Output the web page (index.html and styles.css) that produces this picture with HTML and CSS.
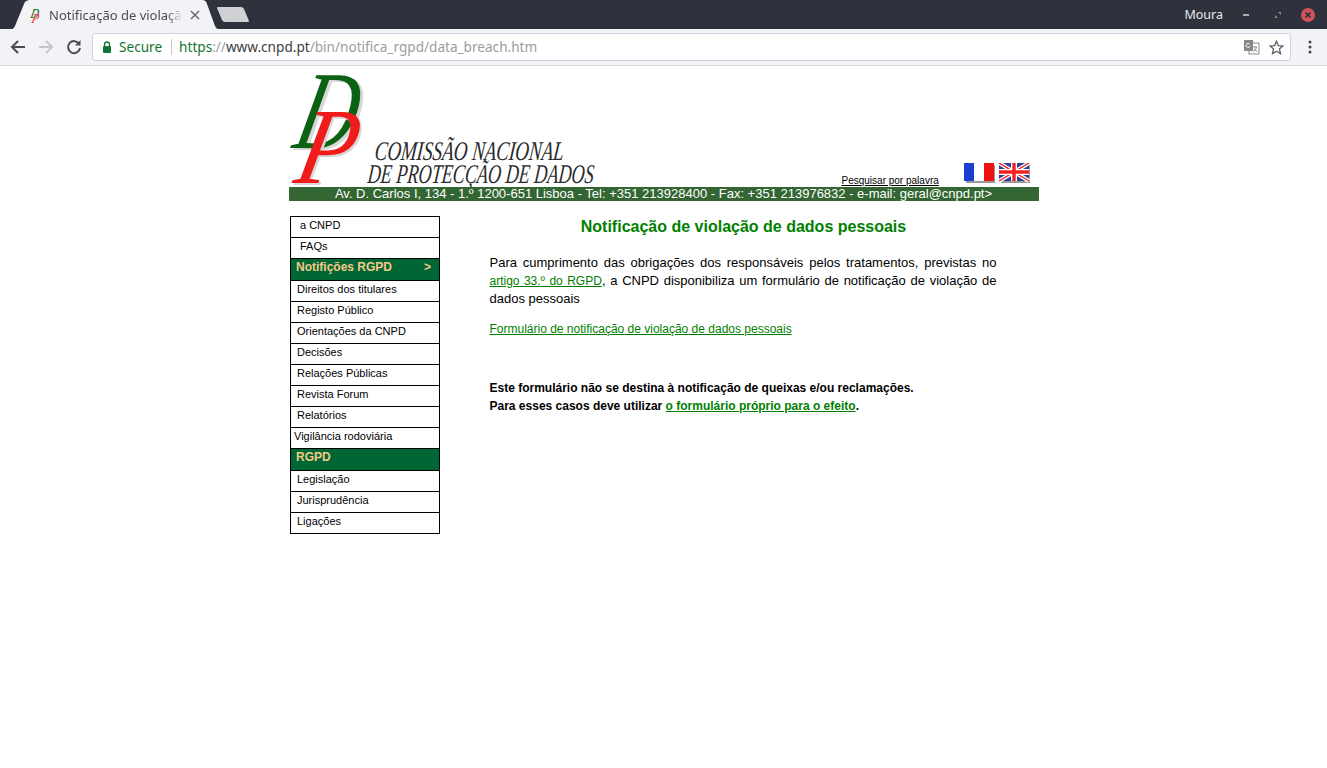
FILE: index.html
```html
<!DOCTYPE html>
<html lang="pt">
<head>
<meta charset="utf-8">
<title>Notificação de violação de dados pessoais</title>
<link rel="stylesheet" href="styles.css">
</head>
<body>
<div class="titlebar">
  <div class="tab">
    <svg class="tab-shape" width="206" height="29" viewBox="0 0 206 29"><path d="M0 29 C1 29 2 28 3 26 L12 4 C13 1 15 0 18 0 L190 0 C193 0 194 1 195 4 L203 26 C204 28 205 29 206 29 Z" fill="#f2f3f7"/></svg>
    <svg class="favicon" width="14" height="18" viewBox="0 0 14 18"><text class="fav-d" transform="translate(0 12) skewX(-12) scale(.85 1.05)">D</text><text class="fav-p" transform="translate(1 17) skewX(-14) scale(.85 1.05)">P</text></svg>
    <span class="tab-title">Notificação de violação</span>
    <svg class="tab-close" width="10" height="10" viewBox="0 0 10 10"><path d="M1 1 L9 9 M9 1 L1 9" stroke="#6b6e73" stroke-width="1.6"/></svg>
  </div>
  <svg class="newtab" width="33" height="16" viewBox="0 0 33 16"><path d="M1 0 L24 0 Q26 0 27 2 L32 14 Q32 15 31 15 L8 15 Q6 15 5 13 L0 1 Q0 0 1 0 Z" fill="#d0d1d4"/></svg>
  <div class="spacer"></div>
  <span class="user">Moura</span>
  <svg class="win" width="8" height="8" viewBox="0 0 8 8"><rect x="0" y="3" width="6" height="2" fill="#a9abb0"/></svg>
  <svg class="win win-max" width="8" height="8" viewBox="0 0 8 8"><path d="M4 1 H7 V4 Z M1 4 L4 7 H1 Z" fill="#8a8d93"/></svg>
  <svg class="win-close" width="14" height="14" viewBox="0 0 14 14"><circle cx="7" cy="7" r="7" fill="#d0525a"/><path d="M4.5 4.5 L9.5 9.5 M9.5 4.5 L4.5 9.5" stroke="#2f323c" stroke-width="1.7"/></svg>
</div>
<div class="toolbar">
  <svg class="tool" width="16" height="16" viewBox="0 0 16 16"><path d="M15 8 H2 M8 2 L2 8 L8 14" fill="none" stroke="#4a4c50" stroke-width="2"/></svg>
  <svg class="tool" width="16" height="16" viewBox="0 0 16 16"><path d="M1 8 H14 M8 2 L14 8 L8 14" fill="none" stroke="#c4c6ca" stroke-width="2"/></svg>
  <svg class="tool" width="16" height="16" viewBox="0 0 16 16"><path d="M13.2 5 A6 6 0 1 0 14 9" fill="none" stroke="#4a4c50" stroke-width="2"/><path d="M14.5 1 V6.5 H9 Z" fill="#4a4c50"/></svg>
  <div class="omnibox">
    <svg class="lock" width="10" height="12" viewBox="0 0 10 12"><path d="M2.5 5 V3.5 a2.5 2.5 0 0 1 5 0 V5" fill="none" stroke="#137333" stroke-width="1.3"/><rect x="1" y="5" width="8" height="7" rx="1" fill="#137333"/></svg>
    <span class="secure">Secure</span>
    <span class="sep"></span>
    <span class="url"><span class="https">https</span><span class="slashes">://</span><span class="host">www.cnpd.pt</span><span class="path">/bin/notifica_rgpd/data_breach.htm</span></span>
    <div class="spacer"></div>
    <svg class="omni-icon" width="16" height="15" viewBox="0 0 16 15"><rect x="5" y="3" width="10" height="11" fill="#fff" stroke="#8a8c90"/><rect x="0" y="0" width="9" height="11" fill="#85888c"/><path d="M6 6 A2 2 0 1 1 5.5 4" fill="none" stroke="#fff"/><path d="M9 7 H13 M11 6 V7 M12.5 7 C12 10 10 11 9 12 M10 8.5 C11 10 12 11 13.5 11.5" fill="none" stroke="#85888c" stroke-width=".9"/></svg>
    <svg class="omni-star" width="15" height="15" viewBox="0 0 15 15"><path d="M7.5 1.3 L9.3 5.6 L14 6 L10.4 9 L11.5 13.6 L7.5 11.2 L3.5 13.6 L4.6 9 L1 6 L5.7 5.6 Z" fill="none" stroke="#5c5f63" stroke-width="1.3"/></svg>
  </div>
  <svg class="kebab" width="4" height="14" viewBox="0 0 4 14"><circle cx="2" cy="2" r="1.5" fill="#44464a"/><circle cx="2" cy="7" r="1.5" fill="#44464a"/><circle cx="2" cy="12" r="1.5" fill="#44464a"/></svg>
</div>

<div class="page">
  <header class="header">
    <svg class="logo" width="310" height="121" viewBox="0 0 310 121">
      <text class="logo-shadow" transform="translate(5 84) skewX(-13) scale(.79 1.07)">D</text>
      <text class="logo-d" transform="translate(2 82) skewX(-13) scale(.79 1.07)">D</text>
      <text class="logo-shadow logo-small" transform="translate(5 119) skewX(-12) scale(1 1.13)">P</text>
      <text class="logo-p" transform="translate(3 117) skewX(-12) scale(1 1.13)">P</text>
      <text class="logo-line" transform="translate(85 94) skewX(-6)" textLength="189" lengthAdjust="spacingAndGlyphs">COMISSÃO NACIONAL</text>
      <text class="logo-line" transform="translate(78 117) skewX(-6)" textLength="226" lengthAdjust="spacingAndGlyphs">DE PROTECÇÃO DE DADOS</text>
    </svg>
    <a class="search" href="#">Pesquisar por palavra</a>
    <svg class="flag flag-fr" width="31" height="20" viewBox="0 0 31 20"><rect x="2" y="2" width="29" height="18" fill="#999"/><rect width="10" height="18" fill="#1c3fd0"/><rect x="10" width="10" height="18" fill="#fff"/><rect x="20" width="10" height="18" fill="#ee1111"/></svg>
    <svg class="flag" width="31" height="20" viewBox="0 0 31 20"><rect x="2" y="2" width="29" height="18" fill="#999"/><rect width="30" height="18" fill="#2a3f98"/><path d="M0 0 L30 18 M30 0 L0 18" stroke="#fff" stroke-width="4"/><path d="M0 0 L30 18 M30 0 L0 18" stroke="#e22" stroke-width="1.4"/><path d="M15 0 V18 M0 9 H30" stroke="#fff" stroke-width="6"/><path d="M15 0 V18 M0 9 H30" stroke="#e22" stroke-width="3.4"/></svg>
  </header>
  <div class="address">Av. D. Carlos I, 134 - 1.º 1200-651 Lisboa - Tel: +351 213928400 - Fax: +351 213976832 - e-mail: geral@cnpd.pt&gt;</div>
  <div class="content">
    <nav class="menu">
      <a class="item indent" href="#">a CNPD</a>
      <a class="item indent" href="#">FAQs</a>
      <a class="item head" href="#"><span>Notifições RGPD</span><span>&gt;</span></a>
      <a class="item" href="#">Direitos dos titulares</a>
      <a class="item" href="#">Registo Público</a>
      <a class="item" href="#">Orientações da CNPD</a>
      <a class="item" href="#">Decisões</a>
      <a class="item" href="#">Relações Públicas</a>
      <a class="item" href="#">Revista Forum</a>
      <a class="item" href="#">Relatórios</a>
      <a class="item outdent" href="#">Vigilância rodoviária</a>
      <a class="item head" href="#"><span>RGPD</span></a>
      <a class="item" href="#">Legislação</a>
      <a class="item" href="#">Jurisprudência</a>
      <a class="item" href="#">Ligações</a>
    </nav>
    <main class="main">
      <h1 class="title">Notificação de violação de dados pessoais</h1>
      <p class="para">Para cumprimento das obrigações dos responsáveis pelos tratamentos, previstas no <a class="link small" href="#">artigo 33.º do RGPD</a>, a CNPD disponibiliza um formulário de notificação de violação de dados pessoais</p>
      <p class="form-link"><a class="link" href="#">Formulário de notificação de violação de dados pessoais</a></p>
      <p class="note">Este formulário não se destina à notificação de queixas e/ou reclamações.<br>Para esses casos deve utilizar <a class="link" href="#">o formulário próprio para o efeito</a>.</p>
    </main>
  </div>
</div>
</body>
</html>
```

FILE: styles.css
```css
* { box-sizing: border-box; }
html, body { margin: 0; padding: 0; background: #fff; }
body { font-family: "Liberation Sans", Arial, sans-serif; overflow: hidden; height: 768px; }
svg { display: block; flex: none; }
.spacer { flex: 1; }

.titlebar { height: 29px; background: #2f323d; display: flex; align-items: center; font-family: "Noto Sans", sans-serif; }
.tab { position: relative; width: 206px; height: 29px; margin-left: 12px; display: flex; align-items: center; flex: none; padding-left: 18px; }
.tab-shape { position: absolute; left: 0; top: 0; }
.favicon { position: relative; }
.fav-d, .fav-p { font-family: "Liberation Serif", serif; font-style: italic; font-size: 13px; }
.fav-d { fill: #0b6b12; }
.fav-p { fill: #ee1c1c; }
.tab-title { position: relative; margin-left: 5px; width: 134px; overflow: hidden; white-space: nowrap; font-size: 13px; color: #4a4c50; -webkit-mask-image: linear-gradient(to right, #000 88%, transparent); mask-image: linear-gradient(to right, #000 88%, transparent); }
.tab-close { position: relative; margin-left: 7px; }
.newtab { margin-left: -1px; margin-top: 1px; }
.user { color: #e8e8ea; font-size: 12.5px; margin-right: 20px; }
.win { margin-right: 23px; }
.win-max { margin-right: 19px; }
.win-close { margin-right: 12px; }

.toolbar { height: 37px; background: #f2f3f7; border-bottom: 1px solid #d5d6da; display: flex; align-items: center; padding: 0 10px; font-family: "Noto Sans", sans-serif; }
.tool { margin-right: 12px; }
.tool:nth-child(3) { margin-right: 10px; }
.omnibox { flex: none; width: 1199px; height: 28px; background: #fff; border: 1px solid #d0d2e0; border-radius: 3px; display: flex; align-items: center; padding: 0 6px 0 9px; font-size: 13.6px; white-space: nowrap; }
.secure, .url { position: relative; top: -1px; }
.secure { color: #137333; margin-left: 7px; }
.sep { width: 1px; height: 16px; background: #c4c6ca; margin: 0 7px 0 9px; }
.https { color: #137333; }
.slashes { color: #9a9da1; }
.host { color: #3c3e42; }
.path { color: #9a9da1; }
.omni-icon { margin-right: 9px; }
.kebab { margin-left: 17px; }

.page { width: 750px; margin: 0 auto; }
.header { height: 121px; display: flex; align-items: flex-end; }
.logo { margin-right: 243px; }
.search { font-size: 10px; line-height: 12px; color: #000; text-decoration: underline; white-space: nowrap; margin-right: 25px; }
.flag { margin-bottom: 4px; margin-right: 4px; }
.logo-d, .logo-p, .logo-shadow { font-family: "Liberation Serif", serif; font-style: italic; font-size: 104px; }
.logo-small, .logo-p { font-size: 96px; }
.logo-d { fill: #0b6212; }
.logo-shadow { fill: #d8d8d8; }
.logo-p { fill: #f01b1b; }
.logo-line { font-family: "Liberation Serif", serif; font-style: italic; font-size: 27px; fill: #2a2a2a; }

.address { height: 14px; background: #336633; color: #fff; font-size: 13px; line-height: 13px; text-align: center; white-space: nowrap; }

.content { display: flex; padding-top: 15px; }
.menu { width: 150px; margin-left: 1px; flex: none; border: 1px solid #000; display: flex; flex-direction: column; }
.item { height: 21px; border-bottom: 1px solid #000; font-size: 11px; line-height: 16px; color: #000; text-decoration: none; padding-left: 6.5px; white-space: nowrap; display: block; }
.item:last-child { border-bottom: 0; height: 20px; }
.item.indent { padding-left: 9.5px; }
.item.outdent { padding-left: 3.5px; }
.item.head { height: 22px; background: #006633; color: #f5c987; font-weight: bold; font-size: 12px; line-height: 17px; padding: 0 7.5px 0 5.5px; display: flex; justify-content: space-between; }

.main { width: 507px; margin-left: 50px; flex: none; font-size: 13px; color: #000; }
.title { margin: 1px 0 0; font-size: 16px; line-height: 19px; font-weight: bold; color: #008000; text-align: center; padding-left: 1px; }
.para { margin: 18px 0 0; line-height: 18px; text-align: justify; }
.link { color: #008000; }
.small, .form-link { font-size: 12px; }
.form-link { margin: 14px 0 0; line-height: 14px; }
.note { margin: 43px 0 0; font-size: 12px; font-weight: bold; line-height: 18px; }
```
